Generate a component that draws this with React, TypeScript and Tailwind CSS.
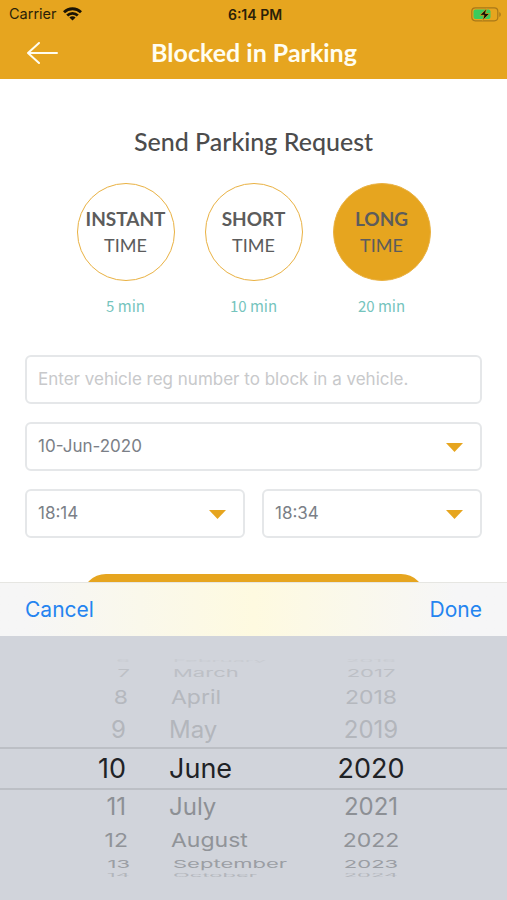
type WheelRow = {
  day: string
  month: string
  year: string
  row: string
  text: string
  shift: string
}

const durations = [
  { name: 'INSTANT', label: '5 min', active: false },
  { name: 'SHORT', label: '10 min', active: false },
  { name: 'LONG', label: '20 min', active: true },
]

// rows shrink and flatten as they roll away from the selected one
const wheel: WheelRow[] = [
  { day: '6', month: 'February', year: '2016', row: 'h-2 overflow-hidden text-[#c9ccd2]', text: 'text-[22px] scale-y-[0.15]', shift: 'translate-x-1' },
  { day: '7', month: 'March', year: '2017', row: 'h-4 text-[#bdc0c6]', text: 'text-[22px] scale-y-[0.5]', shift: 'translate-x-1' },
  { day: '8', month: 'April', year: '2018', row: 'h-8 text-[#b5b8be]', text: 'text-[23px] scale-y-[0.83]', shift: 'translate-x-0.5' },
  { day: '9', month: 'May', year: '2019', row: 'h-[34px] text-[#b3b6bc]', text: 'text-[24px]', shift: '' },
  { day: '10', month: 'June', year: '2020', row: 'h-[43px] border-y-2 border-[#bcbfc5] text-[#202226]', text: 'text-[27px]', shift: '' },
  { day: '11', month: 'July', year: '2021', row: 'h-[34px] text-[#8d9095]', text: 'text-[24px]', shift: '' },
  { day: '12', month: 'August', year: '2022', row: 'h-8 text-[#909398]', text: 'text-[23px] scale-y-[0.83]', shift: 'translate-x-0.5' },
  { day: '13', month: 'September', year: '2023', row: 'h-[15px] text-[#9b9ea4]', text: 'text-[22px] scale-y-[0.5]', shift: 'translate-x-1' },
  { day: '14', month: 'October', year: '2024', row: 'h-[7px] overflow-hidden text-[#b3b6bc]', text: 'text-[22px] scale-y-[0.2]', shift: 'translate-x-1' },
]

function Caret() {
  return (
    <svg className="w-[17px] h-[9px] mt-0.5 shrink-0" viewBox="0 0 17 9" fill="#e6a51f"><path d="M0 0h17L8.5 9z" /></svg>
  )
}

function SelectBox({ value }: { value: string }) {
  return (
    <div className="flex-1 h-[49px] flex items-center justify-between rounded-md border-2 border-[#e5e7e9] pl-[11px] pr-[17px] text-[17px] text-[#7b7f87]">
      <span>{value}</span>
      <Caret />
    </div>
  )
}

function StatusBar() {
  return (
    <div className="h-7 flex items-center justify-between pl-[9px] pr-[6px] text-[14px] text-[#2a1f08]">
      <div className="flex-1 flex items-center gap-[6px]">
        <span className="text-[14.5px]">Carrier</span>
        <svg className="w-[19px] h-[14px]" viewBox="0 0 19 14" fill="none" stroke="#1a1405" strokeWidth="2.8">
          <path d="M1 5.2a12.2 12.2 0 0 1 17 0" />
          <path d="M4.2 8.6a7.6 7.6 0 0 1 10.6 0" />
          <path d="M9.5 13.5 6.4 10.6a4.4 4.4 0 0 1 6.2 0z" fill="#1a1405" stroke="none" />
        </svg>
      </div>
      <span className="font-semibold">6:14 PM</span>
      <div className="flex-1 flex justify-end">
        <svg className="w-[30px] h-[15px]" viewBox="0 0 30 15">
          <rect x="0.8" y="0.8" width="26" height="13" rx="3.5" fill="none" stroke="#a8781a" strokeWidth="1.2" />
          <rect x="2.5" y="2.5" width="17" height="9.6" rx="2" fill="#3bcb5c" />
          <path d="M28.3 5v5c1-.4 1.5-1.300 1.500-2.500S29.300 5.400 28.300 5z" fill="#a8781a" />
          <path d="M15.800 1.500 8.800 8.300h4.200l-1.400 5.200 7-7h-4.200z" fill="#151208" stroke="#e6a51f" strokeWidth="0.700" />
        </svg>
      </div>
    </div>
  )
}

function DateWheel() {
  return (
    <div className="h-[264px] bg-[#d1d4db] pt-[21px]">
      {wheel.map((r) => (
        <div key={r.month} className={`flex items-center ${r.row}`}>
          <div className={`w-[126px] flex justify-end leading-none ${r.shift}`}>
            <span className={r.text}>{r.day}</span>
          </div>
          <div className={`w-[212px] pl-[43px] flex leading-none ${r.shift}`}>
            <span className={r.text}>{r.month}</span>
          </div>
          <div className="w-[66px] flex justify-center leading-none">
            <span className={r.text}>{r.year}</span>
          </div>
        </div>
      ))}
    </div>
  )
}

export default function App() {
  return (
    <div className="w-[507px] h-[900px] overflow-hidden flex flex-col bg-white font-['Inter',sans-serif]">
      <header className="h-[79px] shrink-0 bg-[#e6a51f]">
        <StatusBar />
        <div className="h-[48px] flex items-center px-[27px]">
          <svg className="w-[31px] h-[22px] mt-px" viewBox="0 0 31 22" fill="none" stroke="#fffdf0" strokeWidth="2" strokeLinecap="round" strokeLinejoin="round"><path d="M30 11H1M12 1 1 11l11 10" /></svg>
          <h1 className="flex-1 pr-[30px] text-center font-['Lato',sans-serif] text-[25px] leading-none font-bold text-[#fffdf0]">Blocked in Parking</h1>
        </div>
      </header>

      <main className="h-[503px] shrink-0 overflow-hidden px-[25px]">
        <h2 className="mt-[47px] h-[30px] leading-[30px] text-center font-['Lato',sans-serif] text-[25px] font-medium text-[#4c4c4c]">Send Parking Request</h2>
        <div className="mt-[27px] flex justify-center gap-[30px]">
          {durations.map((d) => (
            <div key={d.name} className="flex flex-col items-center">
              <div className={`size-[98px] rounded-full border-[1.5px] border-[#e9b142] flex flex-col items-center justify-center font-['Lato',sans-serif] text-[#5c5c5c] ${d.active ? 'bg-[#e6a51f]' : ''}`}>
                <span className="h-[27px] leading-[27px] text-[19px] font-bold">{d.name}</span>
                <span className="h-[27px] leading-[27px] text-[18px]">TIME</span>
              </div>
              <span className="mt-[15px] h-5 leading-5 text-[15px] font-['Noto_Sans_CJK_JP',sans-serif] text-[#75c4bd]">{d.label}</span>
            </div>
          ))}
        </div>

        <div className="mt-[39px] flex flex-col gap-[18px]">
          <div className="h-[49px] flex items-center rounded-md border-2 border-[#e5e7e9] px-[11px] text-[17px] text-[#c8c9cb]">Enter vehicle reg number to block in a vehicle.</div>
          <div className="flex">
            <SelectBox value="10-Jun-2020" />
          </div>
          <div className="flex gap-[17px]">
            <SelectBox value="18:14" />
            <SelectBox value="18:34" />
          </div>
        </div>
        <div className="mt-9 mx-auto w-[343px] h-12 rounded-[24px] bg-[#e6a51f]" />
      </main>

      <div className="h-[54px] shrink-0 flex items-center justify-between border-t border-[#e6e6e2] bg-linear-to-r from-[#f6f6f6] from-5% via-[#fefae0] via-50% to-[#f6f6f7] to-90% px-[25px] text-[21px] text-[#2484f0]">
        <span>Cancel</span>
        <span>Done</span>
      </div>
      <DateWheel />
    </div>
  )
}
